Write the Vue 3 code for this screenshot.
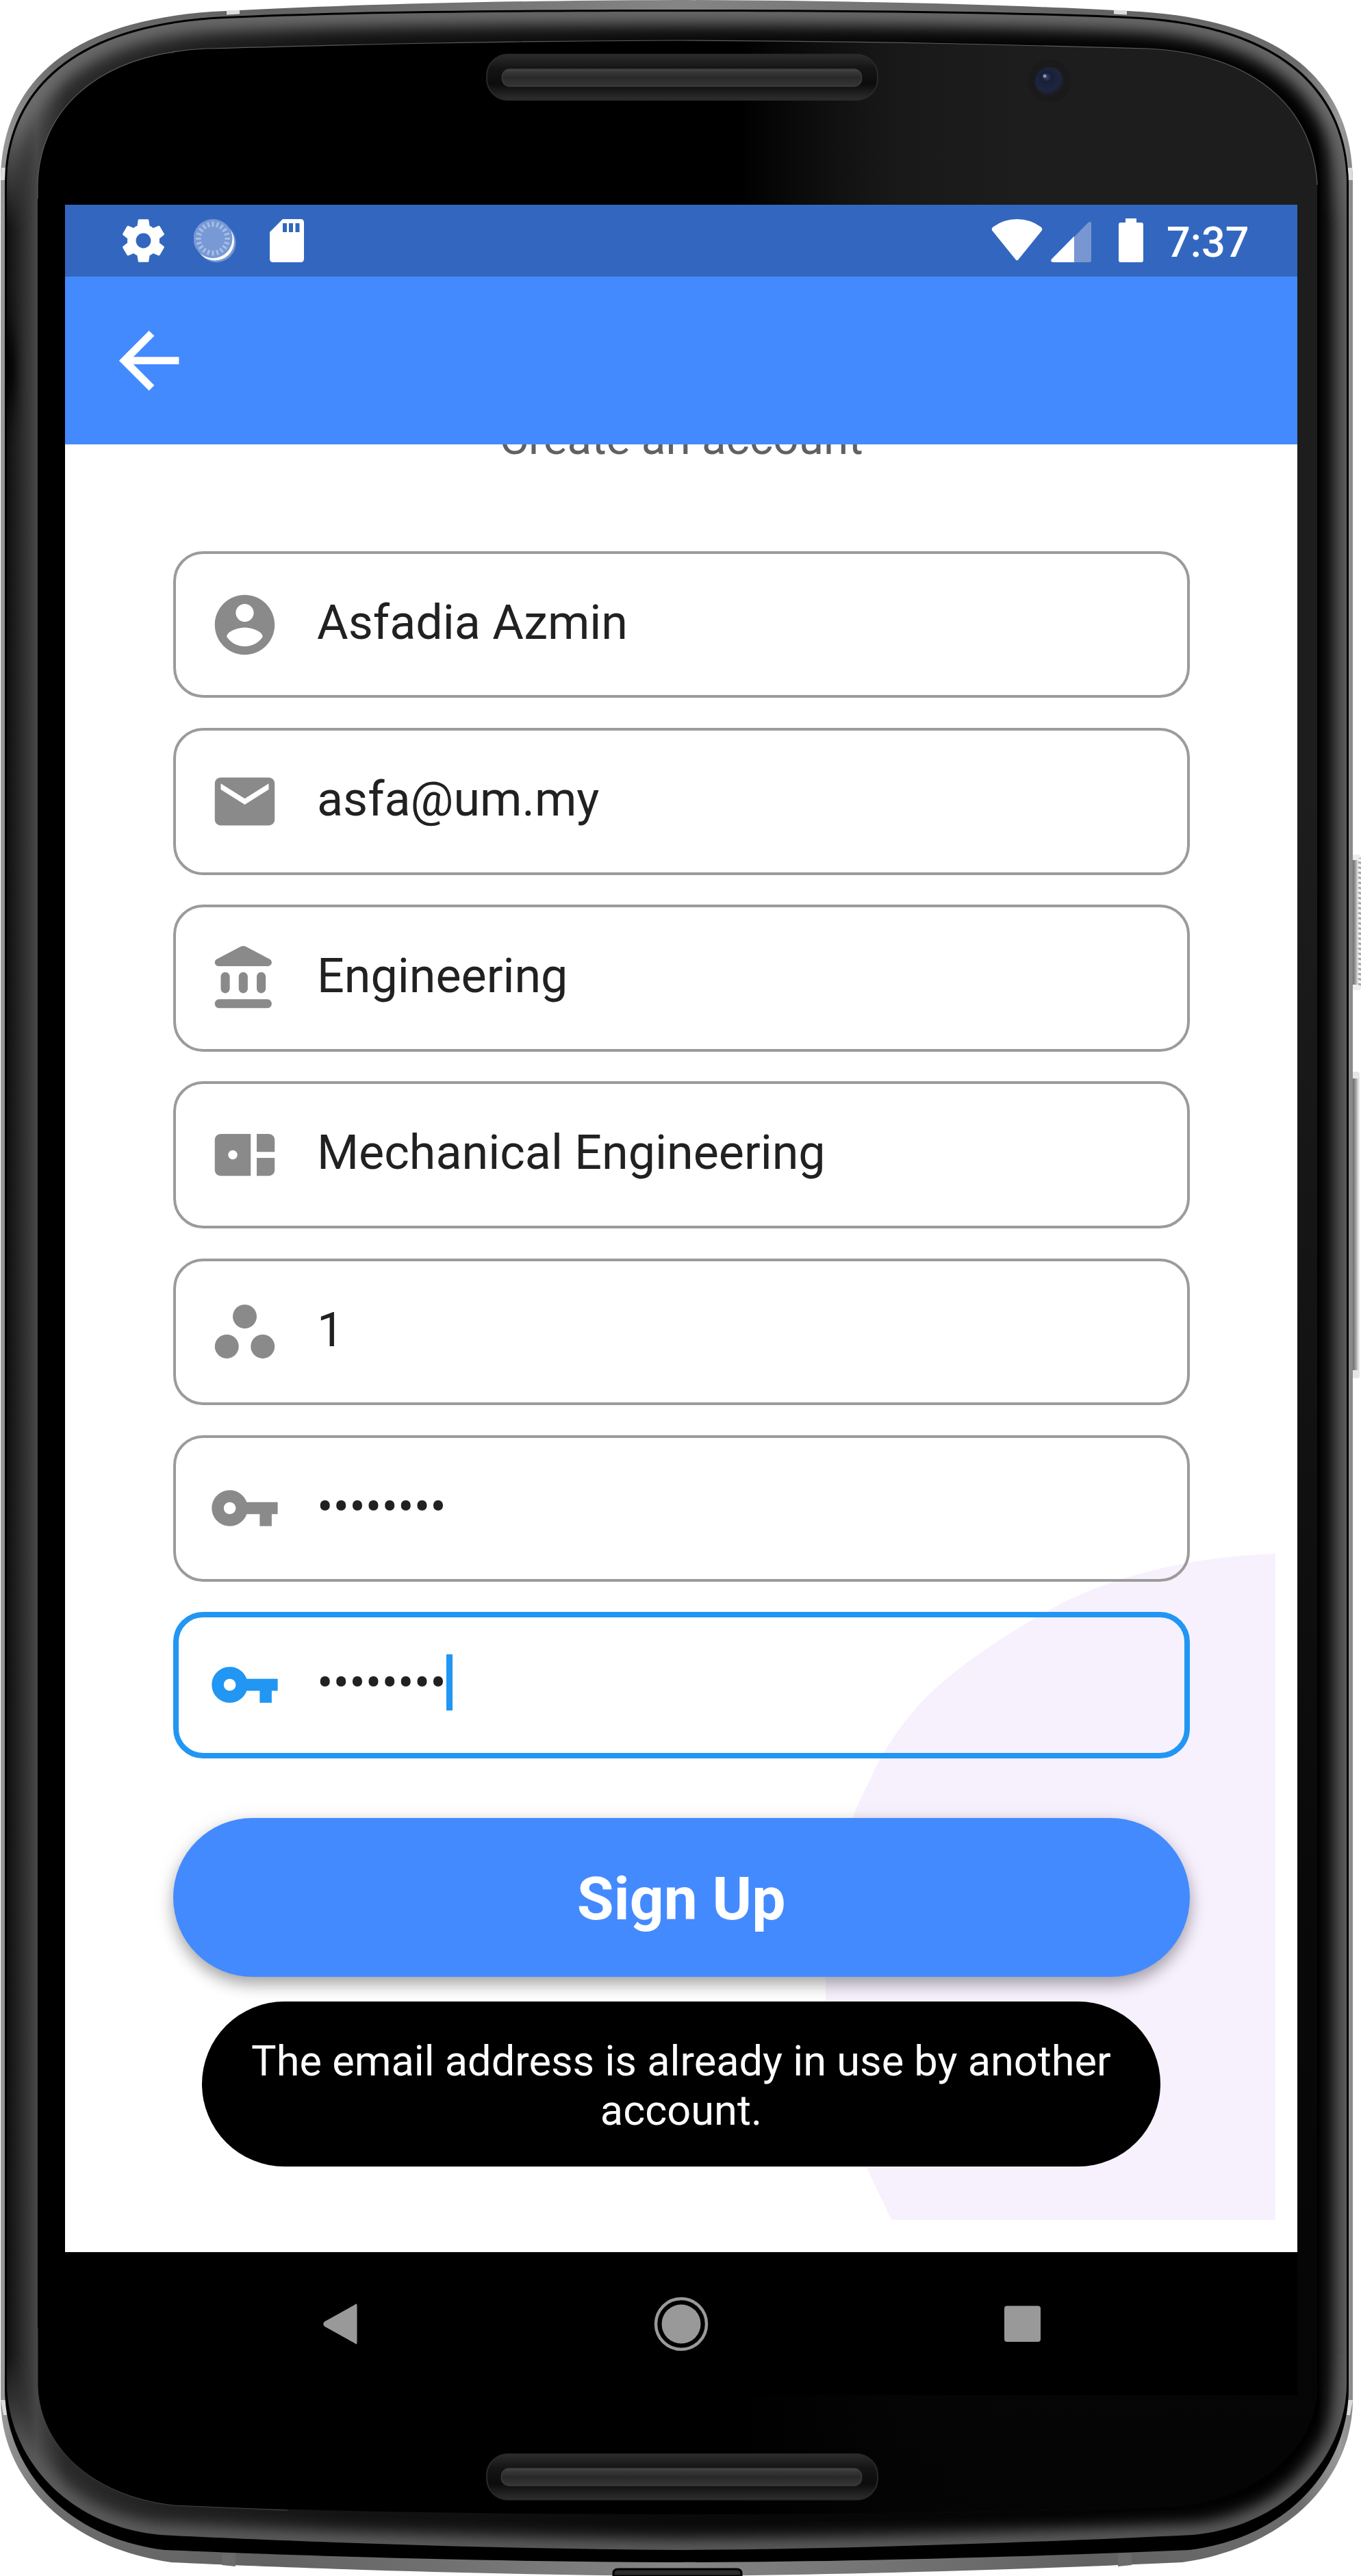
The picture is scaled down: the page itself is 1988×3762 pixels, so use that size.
<script setup>
const fields = [
  { icon: 'person', value: 'Asfadia Azmin' },
  { icon: 'mail', value: 'asfa@um.my' },
  { icon: 'bank', value: 'Engineering' },
  { icon: 'panel', value: 'Mechanical Engineering' },
  { icon: 'dots', value: '1' },
  { icon: 'key', value: '••••••••' },
  { icon: 'key', value: '••••••••', focused: true },
]

const icons = {
  person: 'M12 2C6.48 2 2 6.48 2 12s4.48 10 10 10 10-4.48 10-10S17.52 2 12 2zm0 3c1.66 0 3 1.34 3 3s-1.34 3-3 3-3-1.34-3-3 1.34-3 3-3zm0 14.2c-2.5 0-4.71-1.28-6-3.22.03-1.99 4-3.08 6-3.08 1.99 0 5.97 1.09 6 3.08-1.29 1.94-3.5 3.22-6 3.22z',
  mail: 'M20 4H4c-1.1 0-1.99.9-1.99 2L2 18c0 1.1.9 2 2 2h16c1.1 0 2-.9 2-2V6c0-1.1-.9-2-2-2zm0 4l-8 5-8-5V6l8 5 8-5v2z',
  bank: 'M4 11.5v4c0 .83.67 1.5 1.5 1.5S7 16.33 7 15.5v-4c0-.83-.67-1.5-1.5-1.5S4 10.67 4 11.5zm6 0v4c0 .83.67 1.5 1.5 1.5s1.5-.67 1.5-1.5v-4c0-.83-.67-1.5-1.5-1.5s-1.5.67-1.5 1.5zM3.5 22h16c.83 0 1.5-.67 1.5-1.5s-.67-1.5-1.5-1.5h-16c-.83 0-1.5.67-1.5 1.5S2.67 22 3.5 22zM16 11.5v4c0 .83.67 1.5 1.5 1.5s1.5-.67 1.5-1.5v-4c0-.83-.67-1.5-1.5-1.5s-1.5.67-1.5 1.5zM10.57 1.49l-7.9 4.16c-.41.21-.67.64-.67 1.1C2 7.44 2.56 8 3.25 8h16.51C20.44 8 21 7.44 21 6.75c0-.46-.26-.89-.67-1.1l-7.9-4.16c-.58-.31-1.28-.31-1.86 0z',
  panel: 'M4 5h10v14H4c-1.1 0-2-.9-2-2V7c0-1.1.9-2 2-2zm4 5.45a1.55 1.55 0 1 0 0 3.1 1.55 1.55 0 0 0 0-3.1zM16 5h4c1.1 0 2 .9 2 2v4h-6zM16 13h6v4c0 1.1-.9 2-2 2h-4z',
  dots: 'M8 7a4 4 0 1 0 8 0a4 4 0 1 0-8 0zM2 17a4 4 0 1 0 8 0a4 4 0 1 0-8 0zM14 17a4 4 0 1 0 8 0a4 4 0 1 0-8 0z',
  key: 'M12.65 10C11.83 7.67 9.61 6 7 6c-3.31 0-6 2.69-6 6s2.69 6 6 6c2.61 0 4.83-1.67 5.65-4H17v4h4v-4h2v-4H12.65zM7 14c-1.1 0-2-.9-2-2s.9-2 2-2 2 .9 2 2-.9 2-2 2z',
}

const ticks = Array.from({ length: 20 }, (_, i) => i * 18)
</script>

<template>
  <div class="phone">
    <svg class="frame" viewBox="0 0 1988 3762" aria-hidden="true">
      <defs>
        <linearGradient id="rimX" gradientUnits="userSpaceOnUse" x1="0" x2="1977" y1="0" y2="0">
          <stop offset="0" stop-color="#9a9c9a" /><stop offset=".01" stop-color="#8b8d8b" />
          <stop offset=".04" stop-color="#6c6c6c" /><stop offset=".2" stop-color="#626262" />
          <stop offset=".5" stop-color="#858585" /><stop offset=".8" stop-color="#626262" />
          <stop offset=".96" stop-color="#6c6c6c" /><stop offset=".99" stop-color="#999" />
          <stop offset="1" stop-color="#888" />
        </linearGradient>
        <linearGradient id="bezelX" gradientUnits="userSpaceOnUse" x1="8" x2="1968" y1="0" y2="0">
          <stop offset="0" stop-color="#0d0d0d" /><stop offset=".009" stop-color="#222" />
          <stop offset=".023" stop-color="#464646" /><stop offset=".045" stop-color="#2a2a2a" />
          <stop offset=".25" stop-color="#131313" /><stop offset=".5" stop-color="#0a0a0a" />
          <stop offset=".978" stop-color="#000" /><stop offset=".985" stop-color="#111" />
          <stop offset=".994" stop-color="#484848" /><stop offset="1" stop-color="#606060" />
        </linearGradient>
        <linearGradient id="glowTop" gradientUnits="userSpaceOnUse" x1="0" x2="0" y1="14" y2="330">
          <stop offset="0" stop-color="#6a6a6a" /><stop offset=".5" stop-color="#6e6e6e" />
          <stop offset="1" stop-color="#6e6e6e" stop-opacity="0" />
        </linearGradient>
        <linearGradient id="glowBottom" gradientUnits="userSpaceOnUse" x1="0" x2="0" y1="3440" y2="3730">
          <stop offset="0" stop-color="#606060" stop-opacity="0" /><stop offset=".5" stop-color="#5c5c5c" />
          <stop offset="1" stop-color="#606060" />
        </linearGradient>
        <linearGradient id="glassX" gradientUnits="userSpaceOnUse" x1="1080" x2="1480" y1="0" y2="0">
          <stop offset="0" stop-color="#1d1d1d" stop-opacity="0" /><stop offset=".55" stop-color="#181818" />
          <stop offset="1" stop-color="#1d1d1d" />
        </linearGradient>
        <linearGradient id="glassY" x1="0" x2="0" y1="0" y2="1">
          <stop offset=".3" stop-color="#000" stop-opacity="0" /><stop offset=".75" stop-color="#000" stop-opacity=".7" />
          <stop offset="1" stop-color="#000" stop-opacity=".85" />
        </linearGradient>
        <linearGradient id="slot" x1="0" x2="0" y1="0" y2="1">
          <stop offset="0" stop-color="#2c2c2c" /><stop offset=".3" stop-color="#151515" />
          <stop offset=".65" stop-color="#0c0c0c" /><stop offset="1" stop-color="#2e2e2e" />
        </linearGradient>
        <linearGradient id="bar" x1="0" x2="0" y1="0" y2="1">
          <stop offset="0" stop-color="#4c4c4c" /><stop offset=".15" stop-color="#383838" />
          <stop offset=".5" stop-color="#292929" /><stop offset=".9" stop-color="#333" /><stop offset="1" stop-color="#383838" />
        </linearGradient>
        <radialGradient id="lens" cx=".4" cy=".35" r=".65">
          <stop offset="0" stop-color="#3a4560" /><stop offset=".25" stop-color="#182039" />
          <stop offset=".7" stop-color="#1f2540" /><stop offset="1" stop-color="#1a1b20" />
        </radialGradient>
        <linearGradient id="key" x1="0" x2="1" y1="0" y2="0">
          <stop offset="0" stop-color="#6c6c6c" /><stop offset=".55" stop-color="#a5a5a5" /><stop offset="1" stop-color="#eee" />
        </linearGradient>
        <pattern id="ridges" width="12" height="7.4" patternUnits="userSpaceOnUse" patternTransform="skewY(12)">
          <rect width="12" height="7.4" fill="#f3f3f3" /><rect width="12" height="3" fill="#a2a2a2" />
        </pattern>
        <filter id="soft" filterUnits="userSpaceOnUse" x="-60" y="-60" width="2100" height="3900"><feGaussianBlur stdDeviation="11" /></filter>
        <filter id="wide" filterUnits="userSpaceOnUse" x="-60" y="-60" width="2100" height="3900"><feGaussianBlur stdDeviation="7 34" /></filter>
        <clipPath id="bezelClip">
          <path d="M988 17C700 17 480 20 330 27C97 37 10 143 10 270V3480C10 3580 90 3688 235 3702C420 3711 700 3722 988 3724C1277 3722 1557 3711 1742 3702C1887 3688 1967 3580 1967 3480V270C1967 143 1880 37 1647 27C1497 20 1277 17 988 17Z" />
        </clipPath>
      </defs>

      <rect x="1975" y="1248" width="13" height="198" rx="4" fill="#eee" />
      <rect x="1984" y="1253" width="4" height="188" fill="url(#ridges)" />
      <rect x="1976" y="1256" width="8" height="182" fill="url(#key)" />
      <rect x="1975" y="1565" width="11" height="448" rx="4" fill="#e6e6e6" />
      <rect x="1976" y="1575" width="9" height="426" fill="url(#key)" />

      <path fill="url(#rimX)" d="M988 0C700 1 480 8 330 16C90 26 1 130 1 265V3505C1 3610 85 3718 250 3742C420 3750 700 3760 988 3762C1277 3760 1557 3750 1727 3742C1892 3718 1976 3610 1976 3505V265C1976 130 1887 26 1647 16C1497 8 1277 1 988 0Z" />
      <path fill="#dcdcdc" d="M331 15.500L350 14.500V20.500L331 21.500ZM1646 15.500L1627 14.500V20.500L1646 21.500ZM2 245H8V263H1ZM1975 245H1969V263H1976ZM1 3505H8L10 3527H5ZM1976 3505H1969L1967 3527H1972Z" />
      <path fill="#6c6c6c" d="M324 3729H344V3748L324 3746ZM1653 3729H1633V3748L1653 3746Z" />
      <path fill="#000" d="M988 14C700 14 480 17 330 24C95 34 7 140 7 270V3490C8 3600 90 3705 240 3724C420 3732 700 3741 988 3742C1277 3741 1557 3732 1737 3724C1887 3705 1969 3600 1970 3490V270C1970 140 1882 34 1647 24C1497 17 1277 14 988 14Z" />
      <g clip-path="url(#bezelClip)">
        <rect width="1988" height="3762" fill="url(#bezelX)" />
        <ellipse cx="12" cy="540" rx="12" ry="55" fill="#000" filter="url(#wide)" />
        <path d="M10 360V270C10 143 97 37 330 27C480 20 700 17 988 17C1277 17 1497 20 1647 27C1880 37 1967 143 1967 270V360" fill="none" stroke="url(#glowTop)" stroke-width="38" filter="url(#soft)" />
        <path d="M10 3400V3480C10 3580 90 3688 235 3702C420 3711 700 3722 988 3724C1277 3722 1557 3711 1742 3702C1887 3688 1967 3580 1967 3480V3400" fill="none" stroke="url(#glowBottom)" stroke-width="32" filter="url(#soft)" />
      </g>
      <g>
        <path fill="#000" d="M988 59C700 60 480 66 300 71C130 80 57 170 55 270V3485C58 3570 130 3645 255 3659C420 3666 700 3672 988 3672C1277 3672 1557 3666 1722 3659C1847 3645 1923 3570 1924 3485V270C1920 170 1847 80 1677 71C1497 66 1277 60 988 59Z" />
        <path fill="url(#glassX)" d="M988 59V3672C1277 3672 1557 3666 1722 3659C1847 3645 1923 3570 1924 3485V270C1920 170 1847 80 1677 71C1497 66 1277 60 988 59Z" />
        <path fill="url(#glassY)" d="M988 59V3672C1277 3672 1557 3666 1722 3659C1847 3645 1923 3570 1924 3485V270C1920 170 1847 80 1677 71C1497 66 1277 60 988 59Z" />
        <path fill="none" stroke="#5c5c5c" stroke-width="1.200" d="M55 290V270C57 170 130 80 300 71C480 66 700 60 988 59C1277 60 1497 66 1677 71C1847 80 1920 170 1924 270" />
        <path fill="none" stroke="#444" stroke-width="1" d="M55 3400V3485C58 3570 130 3645 255 3659L420 3666" />
      </g>

      <rect x="711" y="79.500" width="571" height="66.500" rx="31" fill="url(#slot)" stroke="#292929" stroke-width="2" />
      <rect x="733.500" y="101" width="525" height="25" rx="11" fill="url(#bar)" stroke="#3c3c3c" stroke-width="1.500" />
      <rect x="711" y="3584" width="571" height="66.500" rx="31" fill="url(#slot)" stroke="#292929" stroke-width="2" />
      <rect x="732.500" y="3605" width="526" height="25" rx="11" fill="url(#bar)" stroke="#3c3c3c" stroke-width="1.500" />
      <circle cx="1533" cy="118" r="31" fill="#1a1a1a" />
      <circle cx="1533" cy="119" r="21" fill="url(#lens)" />
      <circle cx="1526" cy="111" r="2.500" fill="#8b95b4" />
      <path d="M896 3762V3758Q896 3752 903 3752H1076Q1083 3752 1083 3758V3762Z" fill="#2c2c2c" stroke="#000" stroke-width="3" />
    </svg>

    <div class="screen">
      <header class="status">
        <svg class="gear" viewBox="2.250 2 19.500 20"><path fill="#fff" d="M19.430 12.980c.04-.32.07-.64.07-.98s-.03-.66-.07-.98l2.110-1.650c.19-.15.24-.42.120-.64l-2-3.460c-.12-.22-.39-.3-.61-.22l-2.490 1c-.52-.4-1.080-.73-1.690-.98l-.38-2.650C14.460 2.180 14.250 2 14 2h-4c-.25 0-.46.180-.49.420l-.38 2.650c-.61.25-1.170.59-1.690.98l-2.490-1c-.23-.09-.49 0-.61.220l-2 3.460c-.13.22-.07.49.120.64l2.110 1.650c-.04.32-.07.65-.07.98s.03.66.070.980l-2.110 1.650c-.19.15-.24.42-.12.640l2 3.460c.12.22.39.3.610.220l2.490-1c.52.4 1.080.730 1.690.980l.38 2.650c.03.24.24.420.490.420h4c.25 0 .46-.18.490-.42l.38-2.650c.61-.25 1.170-.59 1.690-.98l2.490 1c.23.09.49 0 .610-.22l2-3.460c.12-.22.07-.49-.12-.64l-2.110-1.650zM12 15.500c-1.930 0-3.500-1.570-3.500-3.500s1.570-3.500 3.500-3.500 3.500 1.570 3.500 3.500-1.570 3.500-3.500 3.500z" /></svg>
        <svg class="spinner" viewBox="0 0 62 63">
          <circle cx="33" cy="34.500" r="28.500" fill="#7799d5" />
          <circle cx="31" cy="32.500" r="28" fill="#fff" />
          <circle cx="28" cy="28.500" r="28.500" fill="#7799d5" />
          <path v-for="t in ticks" :key="t" d="M28 3.500V11" stroke="#a9bfe6" stroke-width="3" :transform="`rotate(${t} 28 28.500)`" />
        </svg>
        <svg class="sd" viewBox="0 0 50 63"><path fill="#fff" d="M19 0H45Q50 0 50 5V58Q50 63 45 63H5Q0 63 0 58V19Z" /><path fill="#3367bf" d="M19 6h6v13h-6zM28 6h6v13h-6zM37.500 6h6v13h-6z" /></svg>
        <svg class="wifi" viewBox="0 0 75 61"><path fill="#fff" d="M1.500 17Q-.500 14 2.500 11.500Q18 0 37.500 0T72.500 11.500Q75.500 14 73.500 17L39.500 59Q37.500 61.500 35.500 59Z" /></svg>
        <svg class="signal" viewBox="0 0 59 59"><path fill="#7896d2" d="M54 1.500Q59-2 59 3V56Q59 59 56 59H34V22Z" /><path fill="#fff" d="M34 21V59H4Q-1.500 59 1 54.500Z" /></svg>
        <svg class="battery" viewBox="0 0 36 64"><path fill="#fff" d="M10 0H26V6H33Q36 6 36 9V61Q36 64 33 64H3Q0 64 0 61V9Q0 6 3 6H10Z" /></svg>
        <span class="time">7:37</span>
      </header>

      <nav class="appbar">
        <svg class="back" viewBox="0 0 24 24"><path fill="#fff" d="M20 11H7.830l5.590-5.590L12 4l-8 8 8 8 1.410-1.410L7.830 13H20v-2z" /></svg>
      </nav>

      <main class="content">
        <svg class="blob" viewBox="0 0 657 973"><path fill="#f7f1fe" d="M657 0C500 5 380 50 324 84C220 142 165 190 137 220C105 255 80 295 67 326C50 358 39 380 25 435C14 470 5 505 0 540V760C15 820 35 860 60 897L96 973H657Z" /></svg>
        <h1 class="title">Create an account</h1>
        <form class="form" @submit.prevent>
          <div v-for="(f, i) in fields" :key="i" class="field" :class="{ focused: f.focused }">
            <svg class="icon" viewBox="0 0 24 24"><path :d="icons[f.icon]" fill="currentColor" fill-rule="evenodd" /></svg>
            <span class="value">{{ f.value }}</span>
            <span v-if="f.focused" class="caret"></span>
          </div>
          <button class="submit" type="submit">Sign Up</button>
        </form>
        <div class="toast">The email address is already in use by another account.</div>
      </main>

      <footer class="navbar">
        <svg viewBox="0 0 80 80"><path fill="#999" d="M64.500 13.500V66.500Q64.500 71.500 61 68L17 43.500Q13.500 40 17 36.500L61 12Q64.500 8.500 64.500 13.500Z" /></svg>
        <svg viewBox="0 0 80 80"><circle cx="40" cy="40" r="37" fill="none" stroke="#999" stroke-width="4.500" /><circle cx="40" cy="40" r="28.500" fill="#999" /></svg>
        <svg viewBox="0 0 80 80"><rect x="14" y="13.500" width="53" height="52.500" rx="4" fill="#999" /></svg>
      </footer>
    </div>
  </div>
</template>

<style>
body {
  margin: 0;
  background: #fff;
}
</style>

<style scoped>
.phone {
  position: relative;
  box-sizing: border-box;
  width: 1988px;
  height: 3762px;
  padding: 299px 93px 0 95px;
  overflow: hidden;
  font-family: Roboto, sans-serif;
}
.frame {
  position: absolute;
  inset: 0;
  width: 1988px;
  height: 3762px;
}
.screen {
  position: relative;
  display: flex;
  flex-direction: column;
  width: 1800px;
  height: 3199px;
  background: #fff;
}
.status {
  display: flex;
  flex: none;
  align-items: flex-start;
  box-sizing: border-box;
  height: 105px;
  padding: 21px 70px 0 84px;
  background: #3367bf;
}
.status svg {
  flex: none;
}
.gear {
  width: 61px;
  height: 63px;
}
.spinner {
  width: 62px;
  height: 63px;
  margin-left: 43px;
}
.sd {
  width: 50px;
  height: 63px;
  margin-left: 49px;
}
.wifi {
  width: 75px;
  height: 61px;
  margin-left: auto;
}
.signal {
  width: 59px;
  height: 59px;
  margin: 4px 0 0 12px;
}
.battery {
  width: 36px;
  height: 64px;
  margin: -1px 0 0 40px;
}
.time {
  width: 121px;
  margin: -2px 0 0 34px;
  color: #fff;
  font-size: 61.25px;
  font-weight: 500;
  line-height: 72px;
  white-space: nowrap;
}
.appbar {
  display: flex;
  flex: none;
  align-items: center;
  height: 245px;
  padding-left: 57px;
  background: #448aff;
}
.back {
  width: 131.25px;
  height: 131.25px;
}
.content {
  position: relative;
  flex: none;
  height: 2640px;
  overflow: hidden;
}
.blob {
  position: absolute;
  top: 1620px;
  left: 1111px;
  width: 657px;
  height: 973px;
}
.title {
  margin: -47px 0 0;
  color: #616161;
  font-size: 65.625px;
  font-weight: 400;
  line-height: 77px;
  text-align: center;
}
.form {
  position: relative;
  display: flex;
  flex-direction: column;
  gap: 43.75px;
  margin: 126px 157.5px 0;
}
.field {
  display: flex;
  box-sizing: border-box;
  height: 214.375px;
  border: 4.375px solid #9b9b9b;
  border-radius: 43.75px;
  padding: 50.5px 48px 0;
  color: #8a8a8a;
}
.field.focused {
  border: 8.75px solid #2196f3;
  padding: 46px 44px 0;
  color: #2196f3;
}
.icon {
  flex: none;
  width: 105px;
  height: 105px;
}
.value {
  margin: 8.5px 0 0 53.5px;
  color: #212121;
  font-size: 70px;
  line-height: 82px;
  white-space: nowrap;
}
.caret {
  width: 9px;
  height: 82px;
  margin-top: 8.5px;
  background: #2196f3;
}
.submit {
  height: 232px;
  margin-top: 43px;
  border: 0;
  border-radius: 116px;
  padding: 4px 0 0;
  background: #448aff;
  box-shadow: 0 13px 24px -2px rgba(0, 0, 0, 0.24), 0 8px 20px rgba(0, 0, 0, 0.1), 0 4px 34px rgba(0, 0, 0, 0.08);
  color: #fff;
  font-family: inherit;
  font-size: 87.5px;
  font-weight: 700;
}
.toast {
  position: absolute;
  top: 2274px;
  left: 200px;
  box-sizing: border-box;
  width: 1400px;
  height: 241px;
  border-radius: 121px;
  padding: 50.5px 60px 0;
  background: #000;
  color: #fff;
  font-size: 61.3px;
  line-height: 72px;
  text-align: center;
}
.navbar {
  display: grid;
  flex: none;
  grid-template-columns: repeat(3, 498px);
  place-content: center;
  place-items: center;
  height: 209px;
  padding-right: 1px;
  background: #000;
}
.navbar svg {
  width: 80px;
  height: 80px;
}
</style>
